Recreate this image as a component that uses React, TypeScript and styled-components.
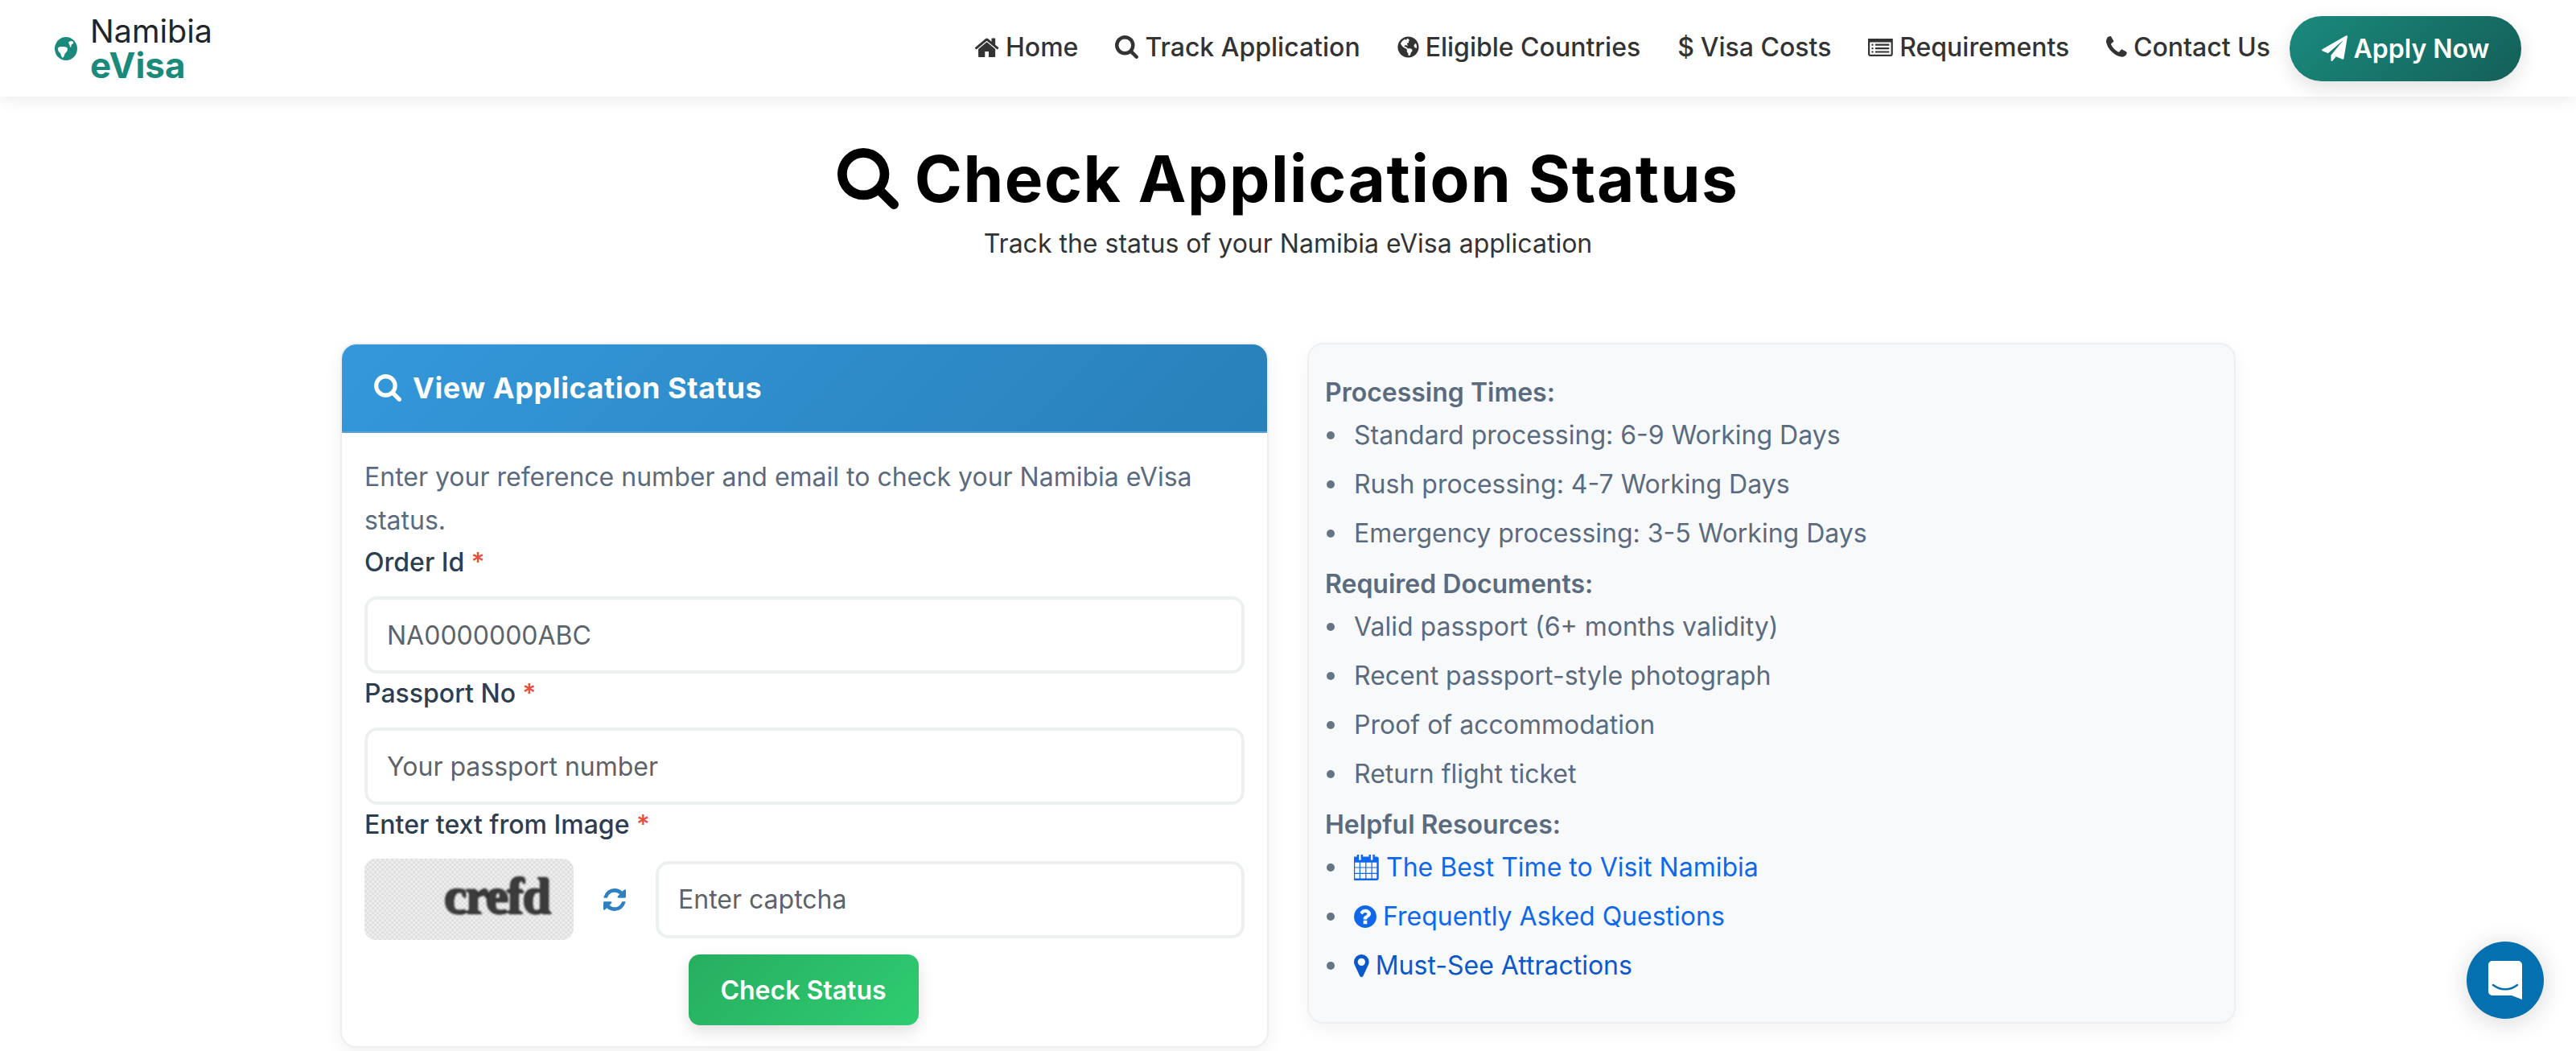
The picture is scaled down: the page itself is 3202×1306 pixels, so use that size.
import styled, { createGlobalStyle } from 'styled-components';
import type { ReactNode } from 'react';
import { FaGlobeAmericas } from 'react-icons/fa';

const GlobalStyle = createGlobalStyle`
  * { box-sizing: border-box; }
  html, body { margin: 0; height: 100%; overflow: hidden; background: #fff; }
  body { font-family: Inter, "Liberation Sans", sans-serif; font-size: 32px; color: #333; }
`;

const ICONS = {
  home: 'M1472 992v480q0 26-19 45t-45 19h-384v-384h-256v384h-384q-26 0-45-19t-19-45v-480q0-1 .5-3t.5-3l575-474 575 474q1 2 1 6zm223-69l-62 74q-8 9-21 11h-3q-13 0-21-7l-692-577-692 577q-12 8-24 7-13-2-21-11l-62-74q-8-10-7-23.500t11-21.500l719-599q32-26 76-26t76 26l244 204v-195q0-14 9-23t23-9h192q14 0 23 9t9 23v408l219 182q10 8 11 21.500t-7 23.500z',
  search: 'M1216 832q0-185-131.500-316.500t-316.500-131.500-316.500 131.500-131.500 316.500 131.500 316.500 316.500 131.500 316.500-131.500 131.500-316.500zm512 832q0 52-38 90t-90 38q-54 0-90-38l-343-342q-179 124-399 124-143 0-273.500-55.500t-225-150-150-225-55.500-273.500 55.500-273.500 150-225 225-150 273.500-55.500 273.500 55.500 225 150 150 225 55.500 273.500q0 220-124 399l343 343q37 37 37 90z',
  list: 'M384 1184v64q0 13-9.500 22.500t-22.500 9.500h-64q-13 0-22.500-9.500t-9.500-22.500v-64q0-13 9.500-22.500t22.500-9.500h64q13 0 22.500 9.500t9.500 22.500zm0-256v64q0 13-9.500 22.500t-22.500 9.500h-64q-13 0-22.500-9.500t-9.500-22.500v-64q0-13 9.500-22.500t22.500-9.500h64q13 0 22.500 9.500t9.500 22.500zm0-256v64q0 13-9.500 22.500t-22.500 9.500h-64q-13 0-22.500-9.500t-9.500-22.500v-64q0-13 9.500-22.500t22.500-9.500h64q13 0 22.500 9.500t9.500 22.500zm1152 512v64q0 13-9.500 22.500t-22.500 9.500h-960q-13 0-22.500-9.500t-9.500-22.500v-64q0-13 9.500-22.500t22.500-9.500h960q13 0 22.500 9.500t9.500 22.500zm0-256v64q0 13-9.500 22.500t-22.500 9.500h-960q-13 0-22.500-9.500t-9.500-22.500v-64q0-13 9.500-22.500t22.500-9.500h960q13 0 22.500 9.500t9.500 22.500zm0-256v64q0 13-9.500 22.500t-22.500 9.500h-960q-13 0-22.500-9.500t-9.500-22.500v-64q0-13 9.500-22.500t22.500-9.500h960q13 0 22.500 9.500t9.500 22.500zm128 704v-832q0-13-9.500-22.500t-22.500-9.500h-1472q-13 0-22.500 9.500t-9.500 22.500v832q0 13 9.500 22.500t22.500 9.500h1472q13 0 22.500-9.500t9.500-22.500zm128-1088v1088q0 66-47 113t-113 47h-1472q-66 0-113-47t-47-113v-1088q0-66 47-113t113-47h1472q66 0 113 47t47 113z',
  phone: 'M1600 1240q0 27-10 70.500t-21 68.500q-21 50-122 106-94 51-186 51-27 0-53-3.500t-57.500-12.500-47-14.500-55.500-20.500-49-18q-98-35-175-83-127-79-264-216t-216-264q-48-77-83-175-3-9-18-49t-20.500-55.500-14.500-47-12.500-57.500-3.500-53q0-92 51-186 56-101 106-122 25-11 68.500-21t70.500-10q14 0 21 3 18 6 53 76 11 19 30 54t35 63.500 31 53.500q3 4 17.500 25t21.500 35.500 7 28.500q0 20-28.500 50t-62 55-62 53-28.500 46q0 9 5 22.500t8.500 20.500 14 24 11.500 19q76 137 174 235t235 174q2 1 19 11.500t24 14 20.500 8.500 22.500 5q18 0 46-28.500t53-62 55-62 50-28.500q14 0 28.500 7t35.500 21.500 25 17.500q25 15 53.500 31t63.500 35 54 30q70 35 76 53 3 7 3 21z',
  plane: 'M1764 11q33 24 27 64l-256 1536q-5 29-32 45-14 8-31 8-11 0-24-5l-453-185-242 295q-18 23-49 23-13 0-22-4-19-7-30.500-23.500t-11.500-36.500v-349l864-1059-1069 925-395-162q-37-14-40-55-2-40 32-59l1664-960q15-9 32-9 20 0 36 11z',
  refresh: 'M1639 1056q0 5-1 7-64 268-268 434.500t-478 166.500q-146 0-282.500-55t-243.500-157l-129 129q-19 19-45 19t-45-19-19-45v-448q0-26 19-45t45-19h448q26 0 45 19t19 45-19 45l-137 137q71 66 161 102t187 36q134 0 250-65t186-179q11-17 53-117 8-23 30-23h192q13 0 22.500 9.500t9.500 22.500zm25-800v448q0 26-19 45t-45 19h-448q-26 0-45-19t-19-45 19-45l138-138q-148-137-349-137-134 0-250 65t-186 179q-11 17-53 117-8 23-30 23h-199q-13 0-22.500-9.500t-9.500-22.500v-7q65-268 270-434.500t480-166.500q146 0 284 55.500t245 156.500l130-129q19-19 45-19t45 19 19 45z',
  calendar: 'M192 1664h288v-288h-288v288zm352 0h320v-288h-320v288zm-352-352h288v-320h-288v320zm352 0h320v-320h-320v320zm-352-384h288v-288h-288v288zm736 736h320v-288h-320v288zm-384-736h320v-288h-320v288zm768 736h288v-288h-288v288zm-384-352h320v-320h-320v320zm-352-864v-288q0-13-9.500-22.500t-22.500-9.500h-64q-13 0-22.500 9.500t-9.500 22.500v288q0 13 9.500 22.500t22.500 9.500h64q13 0 22.500-9.500t9.500-22.500zm736 864h288v-320h-288v320zm-384-384h320v-288h-320v288zm384 0h288v-288h-288v288zm32-480v-288q0-13-9.500-22.500t-22.500-9.500h-64q-13 0-22.500 9.500t-9.500 22.500v288q0 13 9.500 22.500t22.500 9.500h64q13 0 22.500-9.500t9.500-22.500zm384-64v1280q0 52-38 90t-90 38h-1408q-52 0-90-38t-38-90v-1280q0-52 38-90t90-38h128v-96q0-66 47-113t113-47h64q66 0 113 47t47 113v96h384v-96q0-66 47-113t113-47h64q66 0 113 47t47 113v96h128q52 0 90 38t38 90z',
  question: 'M1024 1376v-192q0-14-9-23t-23-9h-192q-14 0-23 9t-9 23v192q0 14 9 23t23 9h192q14 0 23-9t9-23zm256-672q0-88-55.500-163t-138.500-116-170-41q-243 0-371 213-15 24 8 42l132 100q7 6 19 6 16 0 25-12 53-68 86-92 34-24 86-24 48 0 85.500 26t37.500 59q0 38-20 61t-68 45q-63 28-115.500 86.500t-52.500 125.500v36q0 14 9 23t23 9h192q14 0 23-9t9-23q0-19 21.500-49.500t54.500-49.500q32-18 49-28.500t46-35 44.500-48 28-60.500 12.500-81zm384 192q0 209-103 385.500t-279.500 279.500-385.500 103-385.500-103-279.500-279.500-103-385.500 103-385.500 279.500-279.500 385.500-103 385.500 103 279.500 279.500 103 385.500z',
  marker: 'M1152 640q0-106-75-181t-181-75-181 75-75 181 75 181 181 75 181-75 75-181zm256 0q0 109-33 179l-364 774q-16 33-47.500 52t-67.500 19-67.500-19-46.500-52l-365-774q-33-70-33-179 0-212 150-362t362-150 362 150 150 362z',
};

// font-awesome 4 glyphs, cropped by viewBox so each takes its natural advance
function Fa({ name, box, size }: { name: keyof typeof ICONS; box: string; size: number }) {
  const [, , w, h] = box.split(' ').map(Number);
  return (
    <Glyph viewBox={box} width={(size * w) / h} height={size} fill="currentColor">
      <path d={ICONS[name]} />
    </Glyph>
  );
}

const PROCESSING = [
  'Standard processing: 6-9 Working Days',
  'Rush processing: 4-7 Working Days',
  'Emergency processing: 3-5 Working Days',
];

const DOCUMENTS = [
  'Valid passport (6+ months validity)',
  'Recent passport-style photograph',
  'Proof of accommodation',
  'Return flight ticket',
];

function App() {
  const navItems: { label: string; icon: ReactNode }[] = [
    { label: 'Home', icon: <Fa name="home" box="96 224 1616 1312" size={24} /> },
    { label: 'Track Application', icon: <Fa name="search" box="64 128 1664 1664" size={29} /> },
    { label: 'Eligible Countries', icon: <FaGlobeAmericas size={27} /> },
    { label: 'Visa Costs', icon: <DollarSign>$</DollarSign> },
    { label: 'Requirements', icon: <Fa name="list" box="0 256 1792 1280" size={22} /> },
    { label: 'Contact Us', icon: <Fa name="phone" box="192 128 1408 1536" size={28} /> },
  ];

  return (
    <>
      <GlobalStyle />
      <Navbar>
        <Brand>
          <LogoMark viewBox="0 0 28 29">
            <ellipse cx="14" cy="14.500" rx="14" ry="14.500" fill="#1a8a7d" />
            <path d="M17 7c1-2 4-3 6-1 1 2-1 3-2 3l-1 4c-1 0-1-3-3-6z" fill="#fff" />
            <path d="M4 14c1-2 3-2 5-2 3 0 5 0 7 2 0 3-1 5-3 6-1 2-1 4-3 6-2-1-2-4-3-6-2-1-3-3-3-6z" fill="#fff" />
          </LogoMark>
          <BrandText>
            <BrandName>Namibia</BrandName>
            <BrandAccent>eVisa</BrandAccent>
          </BrandText>
        </Brand>
        <NavList>
          {navItems.map((item) => (
            <NavItem key={item.label}>
              {item.icon}
              {item.label}
            </NavItem>
          ))}
          <ApplyButton>
            <Fa name="plane" box="0 0 1792 1792" size={32} />
            Apply Now
          </ApplyButton>
        </NavList>
      </Navbar>

      <Hero>
        <Title>
          <Fa name="search" box="64 128 1664 1664" size={76} />
          Check Application Status
        </Title>
        <Subtitle>Track the status of your Namibia eVisa application</Subtitle>
      </Hero>

      <Columns>
        <FormCard>
          <CardHeader>
            <Fa name="search" box="64 128 1664 1664" size={34} />
            View Application Status
          </CardHeader>
          <CardBody>
            <Intro>Enter your reference number and email to check your Namibia eVisa status.</Intro>
            <Label>Order Id <Required>*</Required></Label>
            <TextInput placeholder="NA0000000ABC" />
            <Label>Passport No <Required>*</Required></Label>
            <TextInput placeholder="Your passport number" />
            <Label>Enter text from Image <Required>*</Required></Label>
            <CaptchaRow>
              <CaptchaImage><CaptchaText>crefd</CaptchaText></CaptchaImage>
              <RefreshIcon><Fa name="refresh" box="128 128 1536 1536" size={28} /></RefreshIcon>
              <TextInput placeholder="Enter captcha" />
            </CaptchaRow>
            <SubmitRow>
              <SubmitButton>Check Status</SubmitButton>
            </SubmitRow>
          </CardBody>
        </FormCard>

        <InfoCard>
          <InfoHeading>Processing Times:</InfoHeading>
          <InfoList>
            {PROCESSING.map((text) => <li key={text}>{text}</li>)}
          </InfoList>
          <InfoHeading>Required Documents:</InfoHeading>
          <InfoList>
            {DOCUMENTS.map((text) => <li key={text}>{text}</li>)}
          </InfoList>
          <InfoHeading>Helpful Resources:</InfoHeading>
          <InfoList>
            <li><ResourceLink href="#"><Fa name="calendar" box="128 128 1664 1664" size={32} />The Best Time to Visit Namibia</ResourceLink></li>
            <li><ResourceLink href="#"><Fa name="question" box="128 128 1536 1536" size={28} />Frequently Asked Questions</ResourceLink></li>
            <li><ResourceLink href="#" $visited><Fa name="marker" box="384 128 1024 1536" size={28} />Must-See Attractions</ResourceLink></li>
          </InfoList>
        </InfoCard>
      </Columns>

      <ChatBubble>
        <svg viewBox="0 0 42 48" width="42" height="48">
          <path d="M5 0h32a5 5 0 0 1 5 5v43l-13-5H5a5 5 0 0 1-5-5V5a5 5 0 0 1 5-5z" fill="#fff" />
          <path d="M6 30c9 7 21 7 30 0" fill="none" stroke="#0570b0" strokeWidth="2.500" strokeLinecap="round" />
        </svg>
      </ChatBubble>
    </>
  );
}

const Glyph = styled.svg`
  flex: none;
  display: block;
`;

const DollarSign = styled.span`
  font-weight: 500;
`;

const Navbar = styled.header`
  height: 120px;
  padding: 0 68px;
  display: flex;
  align-items: center;
  justify-content: space-between;
  background: #fff;
  box-shadow: 0 4px 20px rgba(0, 0, 0, 0.08);
`;

const Brand = styled.div`
  display: flex;
  align-items: center;
  gap: 16px;
`;

const LogoMark = styled.svg`
  width: 28px;
  height: 29px;
  flex: none;
`;

const BrandText = styled.div`
  display: flex;
  flex-direction: column;
  color: #212529;
`;

const BrandName = styled.span`
  font-size: 39.5px;
  line-height: 42px;
`;

const BrandAccent = styled.span`
  font-size: 44px;
  line-height: 42px;
  font-weight: 700;
  color: #1a8a7d;
`;

const NavList = styled.nav`
  display: flex;
  align-items: center;
  gap: 46px;
`;

const NavItem = styled.a`
  display: flex;
  align-items: center;
  gap: 8px;
  margin-bottom: 3px;
  font-weight: 500;
  color: #333;
`;

const ApplyButton = styled.button`
  height: 81px;
  width: 288px;
  margin-left: -22px;
  display: flex;
  align-items: center;
  justify-content: center;
  gap: 8px;
  border: 0;
  border-radius: 40px;
  background: linear-gradient(135deg, #1a8a7d, #145f58);
  box-shadow: 0 8px 24px rgba(0, 0, 0, 0.12);
  color: #fff;
  font: 600 32px Inter, sans-serif;
`;

const Hero = styled.section`
  padding-top: 47px;
  text-align: center;
`;

const Title = styled.h1`
  margin: 0;
  display: flex;
  align-items: center;
  justify-content: center;
  gap: 20px;
  font-size: 80px;
  line-height: 110px;
  font-weight: 700;
  letter-spacing: 1.5px;
  color: #000;
`;

const Subtitle = styled.p`
  margin: 0;
  line-height: 52px;
`;

const Columns = styled.main`
  width: 2356px;
  margin: 97px auto 0;
  display: grid;
  grid-template-columns: 1154px 1154px;
  gap: 48px;
  align-items: start;
`;

const FormCard = styled.section`
  border: 2px solid #ecf0f1;
  border-radius: 20px;
  box-shadow: 0 8px 24px rgba(0, 0, 0, 0.06);
  overflow: hidden;
  background: #fff;
`;

const CardHeader = styled.div`
  height: 110px;
  padding: 0 40px;
  display: flex;
  align-items: center;
  gap: 14px;
  background: linear-gradient(135deg, #3498db, #2980b9);
  border-bottom: 2px solid #5aa3d8;
  color: #fff;
  font-size: 36px;
  font-weight: 700;
  letter-spacing: 0.6px;
`;

const CardBody = styled.div`
  padding: 28px 28px 26px;
`;

const Intro = styled.p`
  margin: 0;
  line-height: 54px;
  color: #5a6b7f;
`;

const Label = styled.label`
  display: block;
  line-height: 50px;
  margin-bottom: 17px;
  font-weight: 500;
  color: #2c3e50;
`;

const Required = styled.span`
  color: #e74c3c;
`;

const TextInput = styled.input`
  display: block;
  width: 100%;
  height: 96px;
  padding: 0 24px;
  border: 4px solid #ecf0f1;
  border-radius: 16px;
  background: #fff;
  font: 400 32px Inter, sans-serif;
  outline: none;

  &::placeholder {
    color: #5c636a;
    opacity: 1;
  }
`;

const CaptchaRow = styled.div`
  display: flex;
  align-items: center;
  margin-top: 2px;
`;

const CaptchaImage = styled.div`
  flex: none;
  width: 260px;
  height: 101px;
  padding: 0 30px 8px 0;
  display: flex;
  align-items: center;
  justify-content: flex-end;
  border-radius: 14px;
  background: repeating-conic-gradient(#e0e0e0 0 25%, #ededed 0 50%) 0 0 / 6px 6px;
`;

const CaptchaText = styled.span`
  font: 700 64px "Liberation Serif", serif;
  letter-spacing: -2px;
  color: #3c3c3c;
  text-shadow: -1px -1px 1px #111, 1px 1px 1px #111;
  filter: blur(1.2px);
`;

const RefreshIcon = styled.span`
  flex: none;
  width: 102px;
  display: flex;
  justify-content: center;
  color: #2f80c0;
`;

const SubmitRow = styled.div`
  display: flex;
  justify-content: center;
  margin-top: 18px;
  padding-right: 3px;
`;

const SubmitButton = styled.button`
  width: 286px;
  height: 88px;
  border: 0;
  border-radius: 14px;
  background: linear-gradient(135deg, #27ae60, #2ecc71);
  box-shadow: 0 8px 20px rgba(0, 0, 0, 0.12);
  color: #fff;
  font: 600 32px Inter, sans-serif;
`;

const InfoCard = styled.aside`
  height: 846px;
  padding: 34px 20px 0;
  border: 2px solid #edf0f3;
  border-radius: 20px;
  background: #f7f9fb;
  box-shadow: 0 8px 24px rgba(0, 0, 0, 0.05);
  color: #5a6b7f;
`;

const InfoHeading = styled.div`
  line-height: 52px;
  font-weight: 600;
`;

const InfoList = styled.ul`
  margin: 0 0 11px;
  padding: 0;
  list-style: none;

  li {
    display: flex;
    align-items: center;
    min-height: 53px;
    margin-bottom: 8px;
  }

  li::before {
    content: '';
    flex: none;
    width: 10px;
    height: 10px;
    margin: 0 24px 0 2px;
    border-radius: 50%;
    background: #667585;
  }
`;

const ResourceLink = styled.a<{ $visited?: boolean }>`
  display: inline-flex;
  align-items: center;
  gap: 8px;
  color: ${(p) => (p.$visited ? '#0a58ca' : '#0f68ec')};
  text-decoration: none;
`;

const ChatBubble = styled.div`
  position: fixed;
  right: 40px;
  bottom: 40px;
  width: 96px;
  height: 96px;
  display: flex;
  align-items: center;
  justify-content: center;
  border-radius: 50%;
  background: #0570b0;
  box-shadow: 0 4px 32px rgba(0, 0, 0, 0.16);
`;

export default App;
